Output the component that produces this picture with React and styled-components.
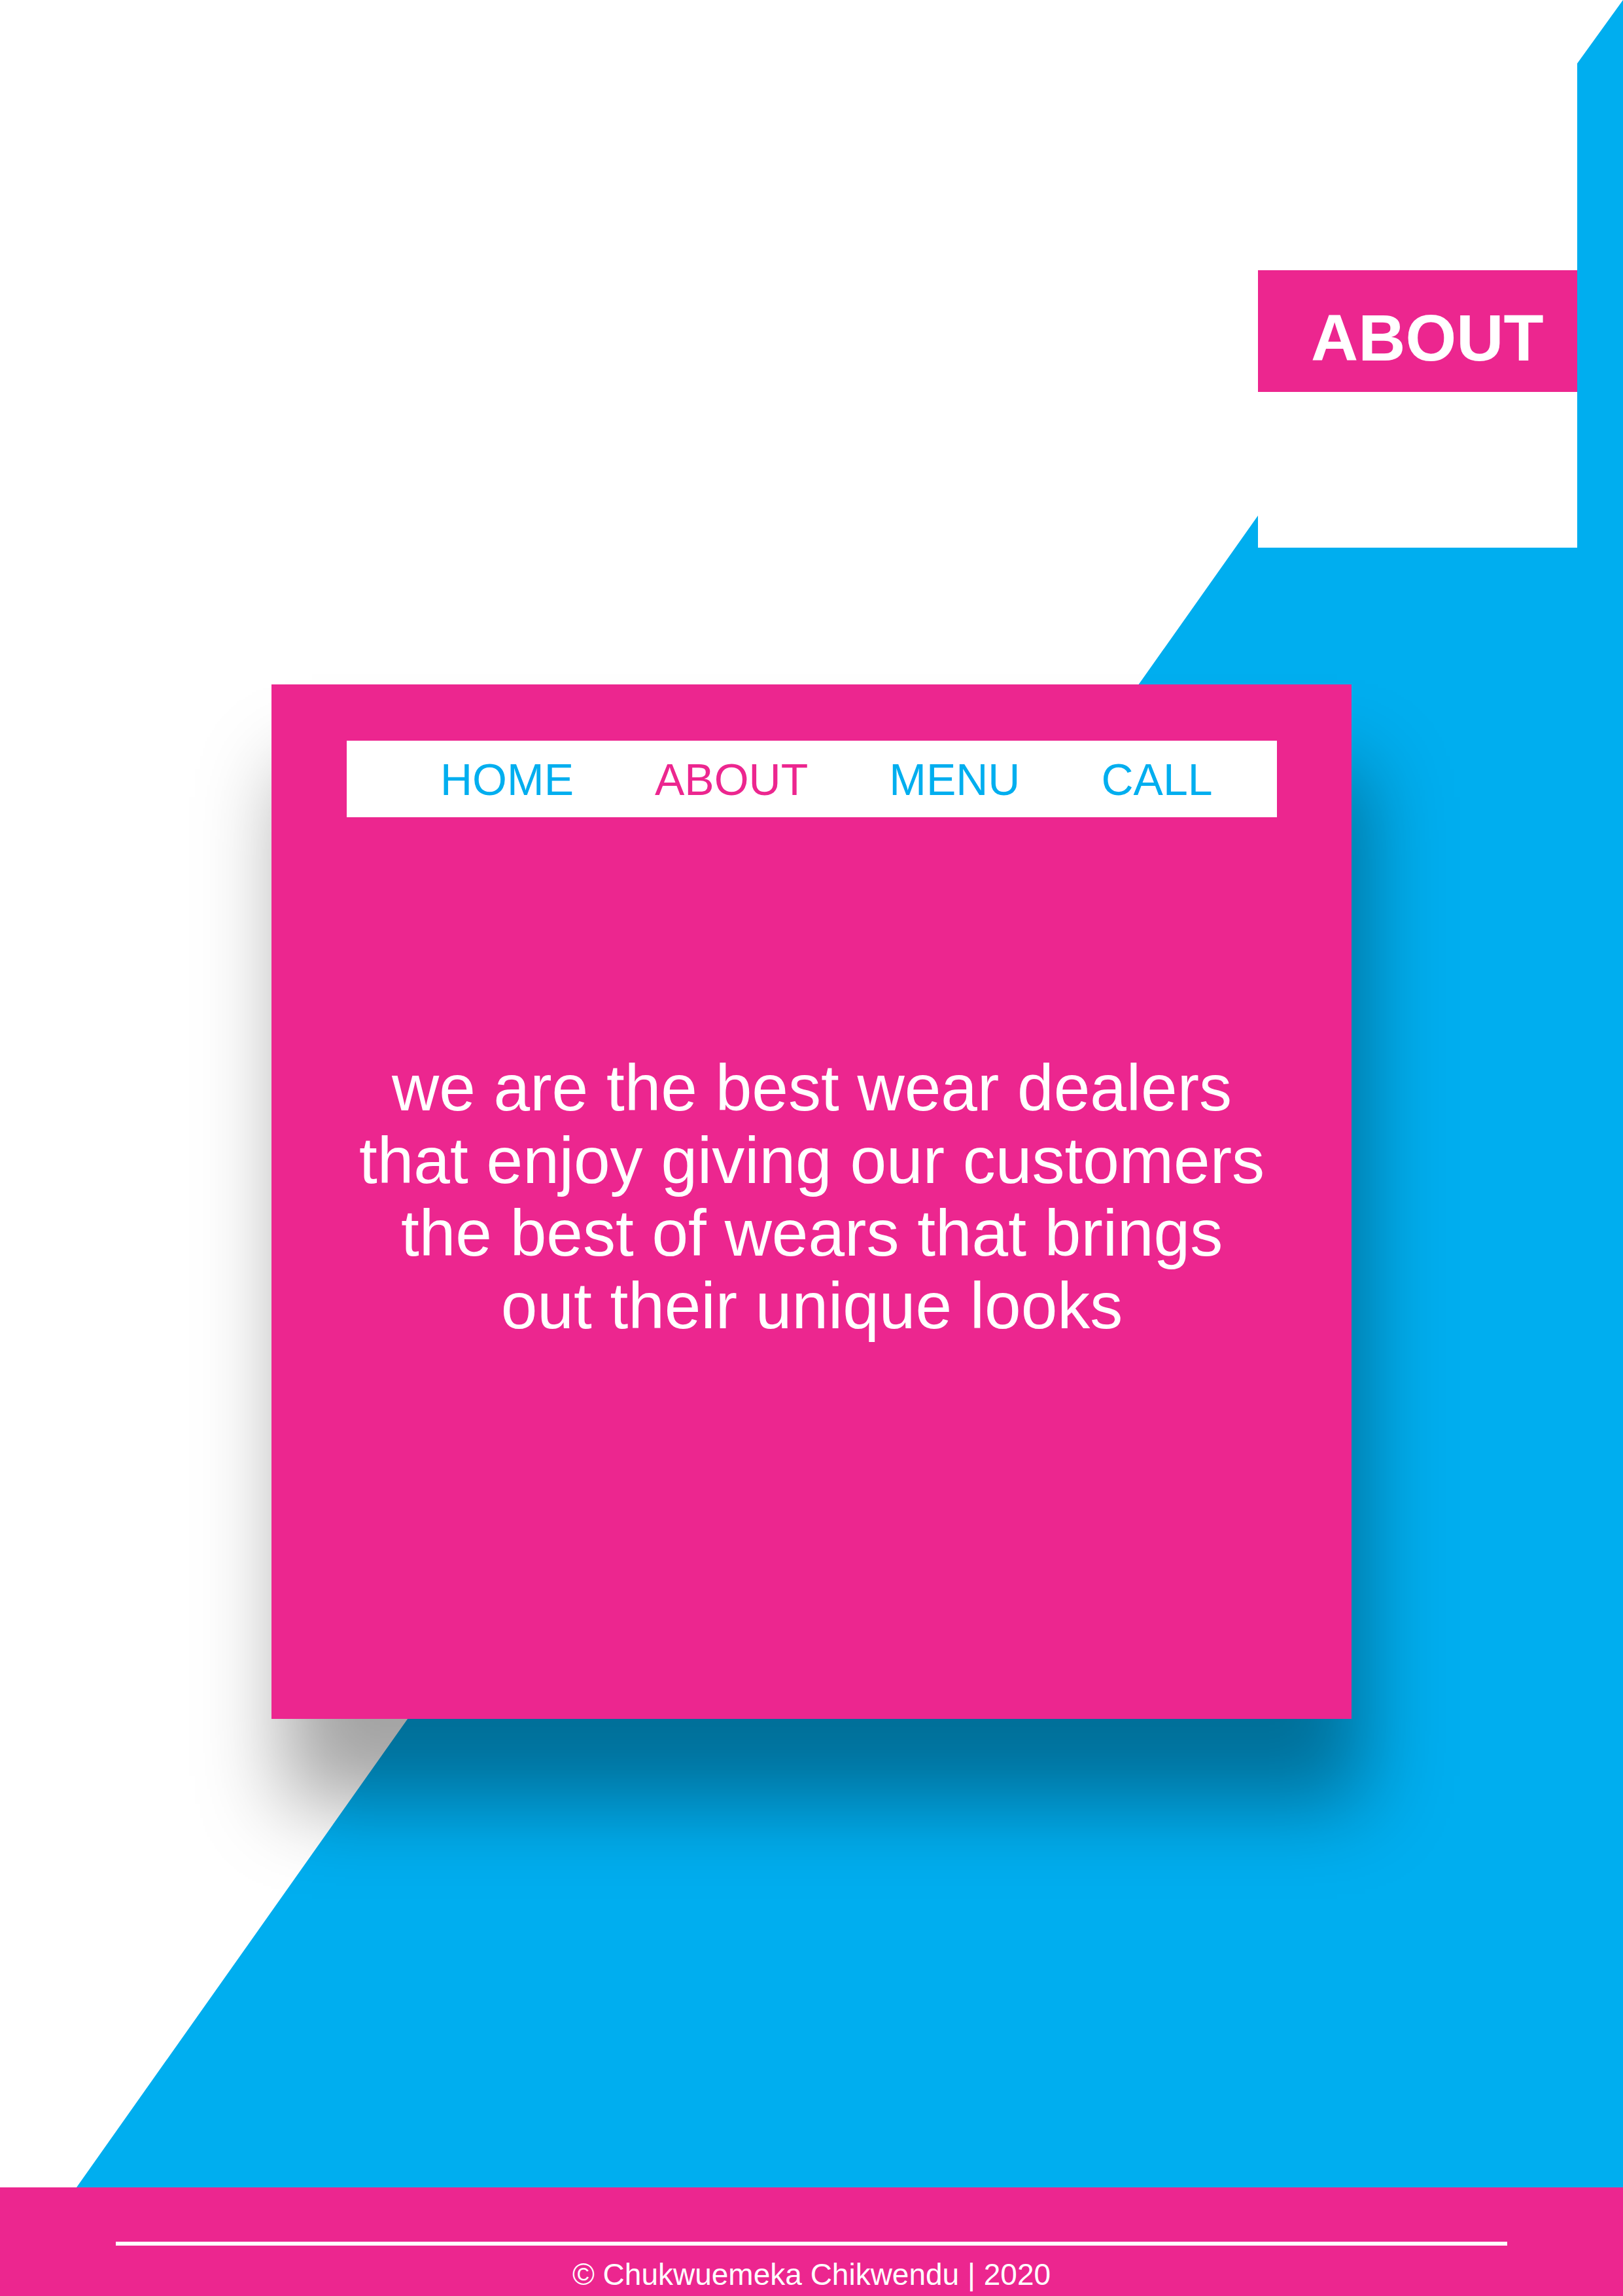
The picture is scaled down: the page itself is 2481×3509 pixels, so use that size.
import React from 'react';
import styled, { createGlobalStyle } from 'styled-components';

const PINK = '#ec268f';
const BLUE = '#00aeef';

const GlobalStyle = createGlobalStyle`
  html, body {
    margin: 0;
    padding: 0;
    background: #ffffff;
  }
  * {
    box-sizing: border-box;
  }
`;

const Page = styled.div`
  width: 2481px;
  font-family: 'Liberation Sans', Arial, sans-serif;
`;

const Hero = styled.section`
  position: relative;
  height: 3343px;
  overflow: hidden;
  display: flex;
  flex-direction: column;
  background: #ffffff;
`;

/* decorative blue backdrop: right strip + diagonal slab */
const Backdrop = styled.div`
  position: absolute;
  inset: 0;
  background: ${BLUE};
  clip-path: polygon(
    2411px 97px,
    2481px 0px,
    2481px 3343px,
    117px 3343px,
    1923px 788px,
    1923px 837px,
    2411px 837px
  );
`;

const LabelRow = styled.div`
  position: relative;
  display: flex;
  justify-content: flex-end;
  padding: 413px 70px 0 0;
`;

const PageTag = styled.h1`
  margin: 0;
  width: 488px;
  height: 186px;
  display: flex;
  align-items: center;
  padding: 20px 0 0 81px;
  background: ${PINK};
  color: #ffffff;
  font-size: 100px;
  font-weight: 700;
  line-height: 1;
`;

const Card = styled.div`
  position: relative;
  align-self: center;
  margin-top: 447px;
  width: 1651px;
  height: 1581px;
  padding: 86px 114px 0 115px;
  display: flex;
  flex-direction: column;
  background: ${PINK};
  box-shadow: 20px 130px 120px rgba(0, 0, 0, 0.36);
`;

const Nav = styled.nav`
  height: 117px;
  display: flex;
  align-items: center;
  gap: 124px;
  padding-left: 143px;
  background: #ffffff;
`;

const NavLink = styled.a`
  color: ${(p) => (p.active ? PINK : BLUE)};
  font-size: 68px;
  line-height: 1;
  text-decoration: none;
`;

const Blurb = styled.p`
  margin: 358px 0 0;
  color: #ffffff;
  font-size: 100px;
  line-height: 111px;
  text-align: center;

  span {
    display: block;
  }
`;

const Footer = styled.footer`
  height: 166px;
  padding-top: 83px;
  background: ${PINK};
`;

const Rule = styled.div`
  height: 6px;
  margin: 0 177px;
  background: #ffffff;
`;

const Copyright = styled.p`
  margin: 18px 0 0;
  color: #ffffff;
  font-size: 46px;
  line-height: 53px;
  text-align: center;
`;

const links = [
  { label: 'HOME' },
  { label: 'ABOUT', active: true },
  { label: 'MENU' },
  { label: 'CALL' },
];

const App = () => {
  return (
    <Page>
      <GlobalStyle />
      <Hero>
        <Backdrop />
        <LabelRow>
          <PageTag>ABOUT</PageTag>
        </LabelRow>
        <Card>
          <Nav>
            {links.map((l) => (
              <NavLink key={l.label} href="#" active={l.active}>
                {l.label}
              </NavLink>
            ))}
          </Nav>
          <Blurb>
            <span>we are the best wear dealers</span>
            <span>that enjoy giving our customers</span>
            <span>the best of wears that brings</span>
            <span>out their unique looks</span>
          </Blurb>
        </Card>
      </Hero>
      <Footer>
        <Rule />
        <Copyright>© Chukwuemeka Chikwendu | 2020</Copyright>
      </Footer>
    </Page>
  );
};

export default App;
